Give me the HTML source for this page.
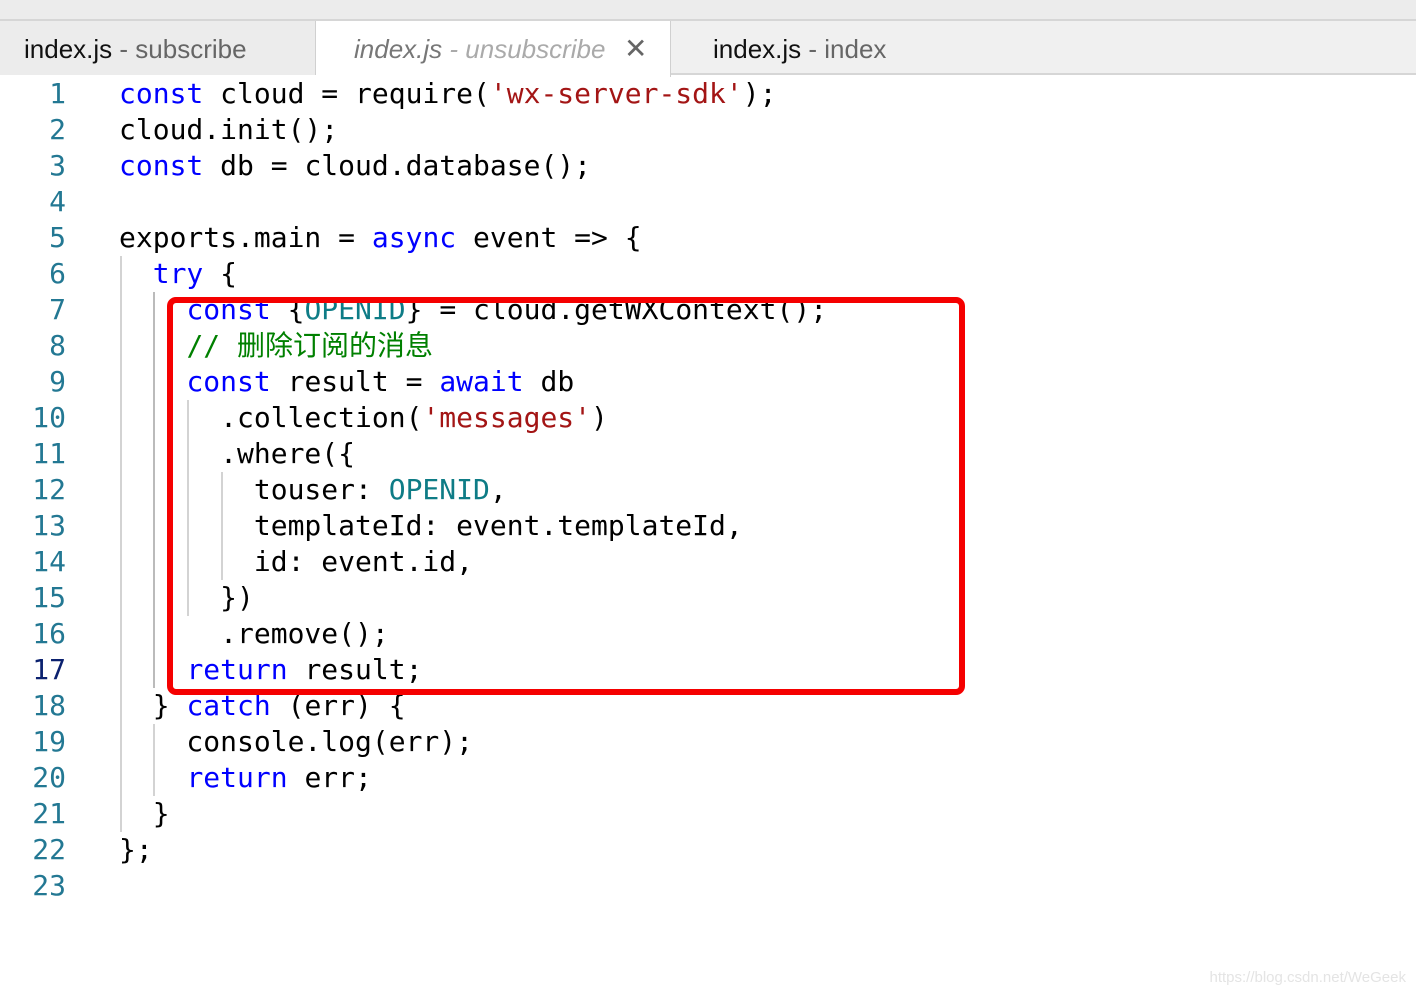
<!DOCTYPE html>
<html><head><meta charset="utf-8"><style>
*{margin:0;padding:0;box-sizing:border-box}
body{width:1416px;height:996px;background:#fff;position:relative;overflow:hidden;font-family:"Liberation Sans",sans-serif}
.top{position:absolute;left:0;top:0;width:1416px;height:21px;background:#ececec;border-bottom:2px solid #d6d6d6}
.tabs{position:absolute;left:0;top:21px;width:1416px;height:54px;background:#f0f0f0;border-bottom:2px solid #d6d6d6}
.tab{position:absolute;top:0;height:54px;line-height:56px;font-size:26px;color:#111;white-space:nowrap}
.tab .g{color:#666}
.t1{left:0;width:316px;padding-left:24px;background:#ececec;border-right:1px solid #d0d0d0}
.t2{left:316px;width:355px;padding-left:38px;background:#fff;height:56px;font-style:italic;color:#777;border-right:1px solid #d0d0d0}
.t2 .g{color:#aaa}
.t2 .x{position:absolute;left:308px;top:0;font-style:normal;color:#666;font-size:28px}
.t3{left:672px;padding-left:41px}
.code{position:absolute;left:0;top:76px;font-family:"DejaVu Sans Mono","Liberation Mono",monospace;font-size:28px;line-height:36px}
.ln{position:absolute;left:0;width:66px;text-align:right;color:#237893}
.c{position:absolute;left:119px;white-space:pre;color:#000}
.k{color:#0000ff}.s{color:#a31515}.m{color:#008000;font-family:"DejaVu Sans Mono","Noto Sans CJK SC",monospace}.o{color:#0e7c86}
.g1{position:absolute;width:2px;background:#d3d3d3}
.box{position:absolute;left:167px;top:297px;width:798px;height:398px;border:6px solid #f50000;border-radius:9px}
.wm{position:absolute;right:10px;bottom:10px;font-size:15px;color:#e4e4e4}
</style></head><body>
<div class="top"></div>
<div class="tabs">
<div class="tab t1">index.js <span class="g">- subscribe</span></div>
<div class="tab t2">index.js <span class="g">- unsubscribe</span><span class="x">✕</span></div>
<div class="tab t3">index.js <span class="g">- index</span></div>
</div>
<div class="g1" style="left:120px;top:256px;height:576px"></div>
<div class="g1" style="left:153px;top:292px;height:396px;background:#bbb"></div>
<div class="g1" style="left:187px;top:400px;height:216px"></div>
<div class="g1" style="left:221px;top:472px;height:108px"></div>
<div class="g1" style="left:153px;top:724px;height:72px"></div>
<div class="code">
<div class="ln" style="top:0">1</div><div class="c" style="top:0"><span class="k">const</span> cloud = require(<span class="s">'wx-server-sdk'</span>);</div>
<div class="ln" style="top:36px">2</div><div class="c" style="top:36px">cloud.init();</div>
<div class="ln" style="top:72px">3</div><div class="c" style="top:72px"><span class="k">const</span> db = cloud.database();</div>
<div class="ln" style="top:108px">4</div>
<div class="ln" style="top:144px">5</div><div class="c" style="top:144px">exports.main = <span class="k">async</span> event =&gt; {</div>
<div class="ln" style="top:180px">6</div><div class="c" style="top:180px">  <span class="k">try</span> {</div>
<div class="ln" style="top:216px">7</div><div class="c" style="top:216px">    <span class="k">const</span> {<span class="o">OPENID</span>} = cloud.getWXContext();</div>
<div class="ln" style="top:252px">8</div><div class="c" style="top:252px">    <span class="m">// 删除订阅的消息</span></div>
<div class="ln" style="top:288px">9</div><div class="c" style="top:288px">    <span class="k">const</span> result = <span class="k">await</span> db</div>
<div class="ln" style="top:324px">10</div><div class="c" style="top:324px">      .collection(<span class="s">'messages'</span>)</div>
<div class="ln" style="top:360px">11</div><div class="c" style="top:360px">      .where({</div>
<div class="ln" style="top:396px">12</div><div class="c" style="top:396px">        touser: <span class="o">OPENID</span>,</div>
<div class="ln" style="top:432px">13</div><div class="c" style="top:432px">        templateId: event.templateId,</div>
<div class="ln" style="top:468px">14</div><div class="c" style="top:468px">        id: event.id,</div>
<div class="ln" style="top:504px">15</div><div class="c" style="top:504px">      })</div>
<div class="ln" style="top:540px">16</div><div class="c" style="top:540px">      .remove();</div>
<div class="ln" style="top:576px;color:#0b216f">17</div><div class="c" style="top:576px">    <span class="k">return</span> result;</div>
<div class="ln" style="top:612px">18</div><div class="c" style="top:612px">  } <span class="k">catch</span> (err) {</div>
<div class="ln" style="top:648px">19</div><div class="c" style="top:648px">    console.log(err);</div>
<div class="ln" style="top:684px">20</div><div class="c" style="top:684px">    <span class="k">return</span> err;</div>
<div class="ln" style="top:720px">21</div><div class="c" style="top:720px">  }</div>
<div class="ln" style="top:756px">22</div><div class="c" style="top:756px">};</div>
<div class="ln" style="top:792px">23</div>
</div>
<div class="box"></div>
<div class="wm">https://blog.csdn.net/WeGeek</div>
</body></html>
